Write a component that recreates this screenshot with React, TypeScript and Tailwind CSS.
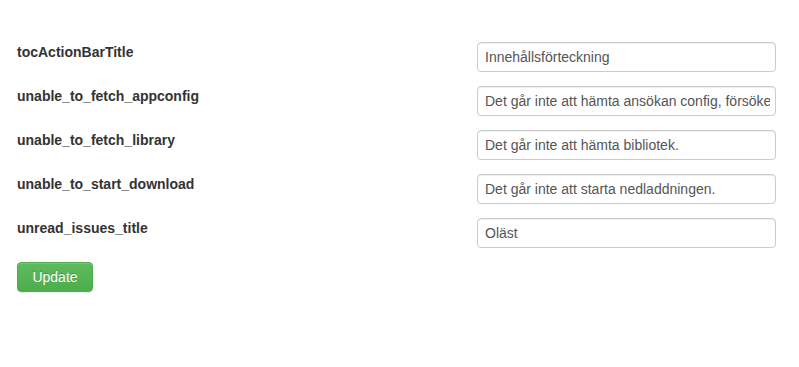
import React from "react";

const rows: { key: string; value: string }[] = [
  { key: "tocActionBarTitle", value: "Innehållsförteckning" },
  { key: "unable_to_fetch_appconfig", value: "Det går inte att hämta ansökan config, försöker igen." },
  { key: "unable_to_fetch_library", value: "Det går inte att hämta bibliotek." },
  { key: "unable_to_start_download", value: "Det går inte att starta nedladdningen." },
  { key: "unread_issues_title", value: "Oläst" },
];

export default function App() {
  return (
    <div
      className="w-[799px] h-[367px] bg-white overflow-hidden"
      style={{ fontFamily: '"Liberation Sans", Arial, Helvetica, sans-serif' }}
    >
      <div className="flex flex-col gap-[14px] pt-[42px] pl-[17px]">
        {rows.map((r) => (
          <div key={r.key} className="flex items-start">
            <label className="w-[460px] text-[14px] leading-[20px] font-bold text-[#333]">
              {r.key}
            </label>
            <input
              readOnly
              defaultValue={r.value}
              className="w-[299px] h-[30px] pl-[7px] pr-[5px] text-[14px] leading-[20px] text-[#555] bg-white border border-[#ccc] rounded-[4px] shadow-[inset_0_1px_1px_rgba(0,0,0,0.075)] outline-none"
              style={{ fontFamily: '"Liberation Sans", Arial, Helvetica, sans-serif' }}
            />
          </div>
        ))}
        <div>
          <button
            className="h-[30px] w-[76px] text-[14px] leading-[20px] text-white rounded-[4px] border border-[#4cae4c] bg-[linear-gradient(to_bottom,#5fba5f_0%,#4cae4c_100%)] shadow-[inset_0_1px_0_rgba(255,255,255,0.15),0_1px_1px_rgba(0,0,0,0.075)] [text-shadow:0_-1px_0_rgba(0,0,0,0.2)]"
          >
            Update
          </button>
        </div>
      </div>
    </div>
  );
}
